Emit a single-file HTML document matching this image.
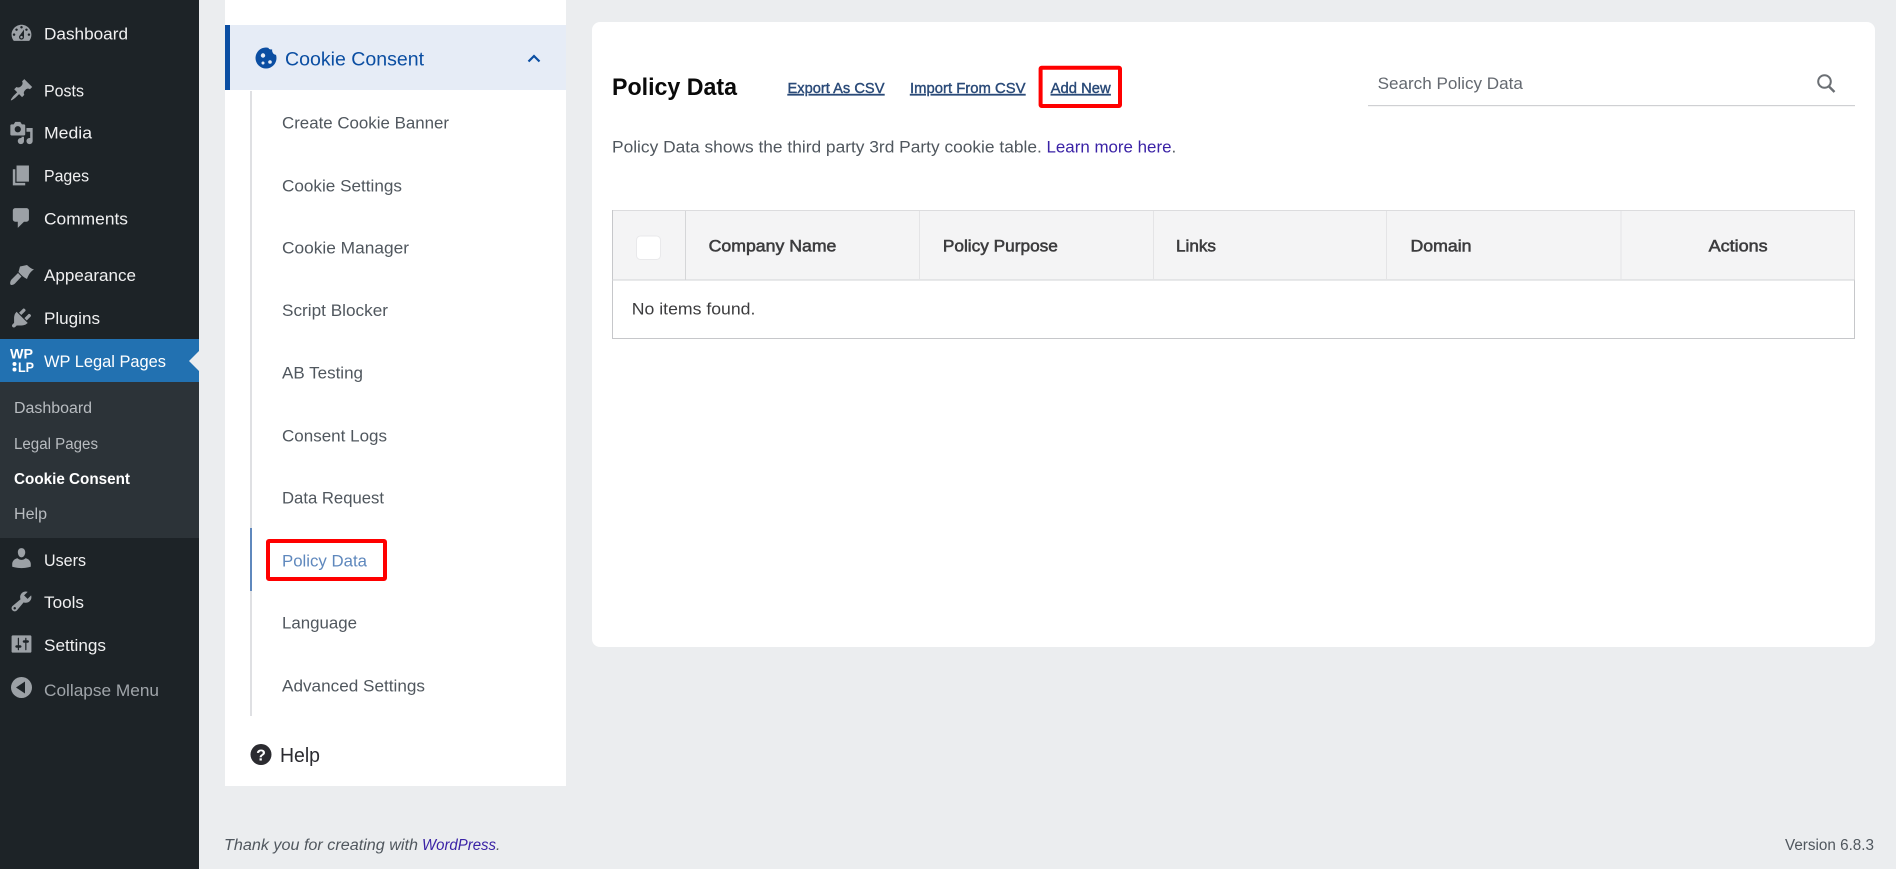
<!DOCTYPE html>
<html lang="en">
<head>
<meta charset="utf-8">
<title>Policy Data</title>
<style>
html,body{margin:0;padding:0;background:#ebedef;width:1896px;height:869px;overflow:hidden}
svg{display:block}
text{font-family:"Liberation Sans",sans-serif;white-space:pre}
.m{font-size:17px;fill:#f0f0f1}
.s{font-size:15.5px;fill:#b8bcc0}
.i{font-size:17px;fill:#50575e}
.ic{fill:#9ca1a6}
.h{font-size:16.5px;fill:#3c3c3e;stroke:#3c3c3e;stroke-width:.55px}
.l{font-size:14.5px;fill:#2a4a78;stroke:#2a4a78;stroke-width:.4px;text-decoration:underline}
</style>
</head>
<body>
<svg width="1896" height="869" viewBox="0 0 1896 869" xmlns="http://www.w3.org/2000/svg">
<rect width="1896" height="869" fill="#ebedef"/>

<!-- admin sidebar -->
<rect width="199" height="869" fill="#1d2327"/>
<rect y="382" width="199" height="156" fill="#2c3338"/>
<rect y="339" width="199" height="43" fill="#2271b1"/>
<path d="M199 351L189 361L199 371Z" fill="#ebedef"/>

<path class="ic" transform="translate(9.1 21) scale(1.24)" d="M3.76 16h12.48c1.1-1.37 1.76-3.11 1.76-5 0-4.42-3.58-8-8-8s-8 3.58-8 8c0 1.89.66 3.63 1.76 5zM10 4c.55 0 1 .45 1 1s-.45 1-1 1-1-.45-1-1 .45-1 1-1zM6 6c.55 0 1 .45 1 1s-.45 1-1 1-1-.45-1-1 .45-1 1-1zm8 0c.55 0 1 .45 1 1s-.45 1-1 1-1-.45-1-1 .45-1 1-1zm-5.37 5.55L12 7v6c0 1.1-.9 2-2 2s-2-.9-2-2c0-.57.24-1.08.63-1.45zM4 10c.55 0 1 .45 1 1s-.45 1-1 1-1-.45-1-1 .45-1 1-1zm12 0c.55 0 1 .45 1 1s-.45 1-1 1-1-.45-1-1 .45-1 1-1zm-5 3c0-.55-.45-1-1-1s-1 .45-1 1 .45 1 1 1 1-.45 1-1z" fill-rule="evenodd"/>
<path class="ic" transform="translate(9.1 77.6) scale(1.24)" d="M10.44 3.02l1.82-1.82 6.36 6.35-1.83 1.82c-1.05-.68-2.48-.57-3.41.36l-.75.75c-.92.93-1.04 2.35-.35 3.41l-1.83 1.82-2.41-2.41-2.8 2.79c-.42.42-3.38 2.71-3.8 2.29s1.86-3.39 2.28-3.81l2.79-2.79L4.1 9.36l1.83-1.82c1.05.69 2.48.57 3.41-.36l.75-.75c.93-.92 1.05-2.35.35-3.41z"/>
<path class="ic" transform="translate(9.1 120.6) scale(1.24)" d="M13 11V4c0-.55-.45-1-1-1h-1.67L9 1H5L3.67 3H2c-.55 0-1 .45-1 1v7c0 .55.45 1 1 1h10c.55 0 1-.45 1-1zM7 4.5c1.38 0 2.5 1.12 2.5 2.5S8.38 9.5 7 9.5 4.5 8.38 4.5 7 5.62 4.5 7 4.5zM14 6h5v10.5c0 1.38-1.12 2.5-2.5 2.5S14 17.88 14 16.5s1.12-2.5 2.5-2.5c.17 0 .34.02.5.05V9h-3V6zm-4 8.05V13h2v3.5c0 1.38-1.12 2.5-2.5 2.5S7 17.88 7 16.5 8.12 14 9.5 14c.17 0 .34.02.5.05z"/>
<path class="ic" transform="translate(9.1 163) scale(1.24)" d="M6 15V2h10v13H6zm-1 1h8v2H3V5h2v11z"/>
<path class="ic" transform="translate(9.1 205.6) scale(1.24)" d="M5 2h9c1.1 0 2 .9 2 2v7c0 1.1-.9 2-2 2h-2l-5 5v-5H5c-1.1 0-2-.9-2-2V4c0-1.1.9-2 2-2z"/>
<path class="ic" d="M20 266.5L27 265C29 267 31 268.6 34 269.5C31 271 28.5 274.5 27 279C24 277.5 21 275 18.5 272Z"/>
<path class="ic" d="M18 273L21.5 276.5L15 283.5C13.5 285 11 285.5 10.5 284.5C9.8 283.5 10.2 281 11.5 279.5Z"/>
<path class="ic" transform="translate(9.1 305.6) scale(1.24)" d="M13.11 4.36L9.87 7.6 8 5.73l3.24-3.24c.35-.34 1.05-.2 1.56.32.52.51.66 1.21.31 1.55zm-8 1.77l.91-1.12 9.01 9.01-1.19.84c-.71.71-2.63 1.16-3.82 1.16H6.14L4.9 17.26c-.59.59-1.54.59-2.12 0-.59-.58-.59-1.53 0-2.12l1.24-1.24v-3.88c0-1.13.4-3.19 1.09-3.89zm7.26 3.97l3.24-3.24c.34-.35 1.04-.21 1.55.31.52.51.66 1.21.31 1.55l-3.24 3.25z"/>
<path class="ic" transform="translate(9.1 545.6) scale(1.24)" d="M10 2c2.2 0 3.2 2 3 3.9 0 0-.4 3.6-3 3.6S7.1 5.9 7.1 5.9C6.8 4 7.8 2 10 2zM6.8 10.2c1 .9 2 1.3 3.2 1.3s2.2-.4 3.2-1.3c2.5.4 4.3 2.4 4.3 4.6V17s-3.4 1.2-7.5 1.2S2.5 17 2.5 17v-2.2c0-2.2 1.8-4.2 4.3-4.6z"/>
<path class="ic" transform="translate(9.1 589) scale(1.24)" d="M16.68 9.77c-1.34 1.34-3.3 1.67-4.95.99l-5.41 6.52c-.99.99-2.59.99-3.58 0s-.99-2.59 0-3.57l6.52-5.42c-.68-1.65-.35-3.61.99-4.95 1.28-1.28 3.12-1.62 4.72-1.06l-2.89 2.89 2.82 2.82 2.86-2.87c.53 1.58.18 3.39-1.08 4.65zM3.81 16.21c.4.39 1.04.39 1.43 0 .4-.4.4-1.04 0-1.43-.39-.4-1.03-.4-1.43 0-.39.39-.39 1.03 0 1.43z"/>
<path class="ic" transform="translate(9.1 631.6) scale(1.24)" d="M18 16V4c0-.55-.45-1-1-1H3c-.55 0-1 .45-1 1v12c0 .55.45 1 1 1h14c.55 0 1-.45 1-1zM8 11h1c.55 0 1 .45 1 1s-.45 1-1 1H8v1.5c0 .28-.22.5-.5.5s-.5-.22-.5-.5V13H6c-.55 0-1-.45-1-1s.45-1 1-1h1V5.5c0-.28.22-.5.5-.5s.5.22.5.5V11zm5-2h-1c-.55 0-1-.45-1-1s.45-1 1-1h1V5.5c0-.28.22-.5.5-.5s.5.22.5.5V7h1c.55 0 1 .45 1 1s-.45 1-1 1h-1v5.5c0 .28-.22.5-.5.5s-.5-.22-.5-.5V9z"/>
<circle class="ic" cx="21.5" cy="687.5" r="10.5"/>
<path d="M25 681.5v12l-9-6z" fill="#1d2327"/>

<text class="m" x="44" y="39.5" textLength="84" lengthAdjust="spacingAndGlyphs">Dashboard</text>
<text class="m" x="44" y="96.5" textLength="40" lengthAdjust="spacingAndGlyphs">Posts</text>
<text class="m" x="44" y="138.5" textLength="48" lengthAdjust="spacingAndGlyphs">Media</text>
<text class="m" x="44" y="181.5" textLength="45" lengthAdjust="spacingAndGlyphs">Pages</text>
<text class="m" x="44" y="224.5" textLength="84" lengthAdjust="spacingAndGlyphs">Comments</text>
<text class="m" x="44" y="281" textLength="92" lengthAdjust="spacingAndGlyphs">Appearance</text>
<text class="m" x="44" y="324" textLength="56" lengthAdjust="spacingAndGlyphs">Plugins</text>
<text class="m" x="44" y="367" textLength="122" lengthAdjust="spacingAndGlyphs" style="fill:#fff">WP Legal Pages</text>
<text x="10" y="358.5" font-size="14" font-weight="700" fill="#fff" textLength="23" lengthAdjust="spacingAndGlyphs">WP</text>
<circle cx="14.5" cy="364" r="2" fill="#fff"/><circle cx="14.5" cy="369.5" r="2" fill="#fff"/>
<text x="18" y="372" font-size="14" font-weight="700" fill="#fff" textLength="16" lengthAdjust="spacingAndGlyphs">LP</text>

<text class="s" x="14" y="413" textLength="78" lengthAdjust="spacingAndGlyphs">Dashboard</text>
<text class="s" x="14" y="449" textLength="84" lengthAdjust="spacingAndGlyphs">Legal Pages</text>
<text class="s" x="14" y="484" textLength="116" lengthAdjust="spacingAndGlyphs" font-weight="700" style="fill:#fff">Cookie Consent</text>
<text class="s" x="14" y="519" textLength="33" lengthAdjust="spacingAndGlyphs">Help</text>

<text class="m" x="44" y="566" textLength="42" lengthAdjust="spacingAndGlyphs">Users</text>
<text class="m" x="44" y="608" textLength="40" lengthAdjust="spacingAndGlyphs">Tools</text>
<text class="m" x="44" y="651" textLength="62" lengthAdjust="spacingAndGlyphs">Settings</text>
<text class="m" x="44" y="696" textLength="115" lengthAdjust="spacingAndGlyphs" style="fill:#a0a5aa">Collapse Menu</text>

<!-- plugin sub navigation -->
<rect x="225" y="0" width="341" height="786" fill="#fff"/>
<rect x="225" y="25" width="341" height="65" fill="#e6ecf6"/>
<rect x="225" y="25" width="5" height="65" fill="#0b4ea2"/>
<circle cx="266" cy="58" r="10.5" fill="#0b4ea2"/>
<circle cx="276.5" cy="50.5" r="4.4" fill="#e6ecf6"/>
<circle cx="271" cy="46.5" r="3" fill="#e6ecf6"/>
<circle cx="263" cy="55.5" r="2.2" fill="#e6ecf6"/>
<circle cx="270" cy="62" r="1.8" fill="#e6ecf6"/>
<circle cx="263" cy="63" r="1.5" fill="#e6ecf6"/>
<text x="285" y="65.5" font-size="19.5" fill="#0b4ea2" textLength="139" lengthAdjust="spacingAndGlyphs">Cookie Consent</text>
<path d="M528.5 61.5L534 56L539.5 61.5" fill="none" stroke="#0b4ea2" stroke-width="2.2"/>

<rect x="250" y="91" width="2" height="625" fill="#dfe0e3"/>
<rect x="250" y="528" width="2" height="63" fill="#5f88bd"/>
<text class="i" x="282" y="128.5" textLength="167" lengthAdjust="spacingAndGlyphs">Create Cookie Banner</text>
<text class="i" x="282" y="191.5" textLength="120" lengthAdjust="spacingAndGlyphs">Cookie Settings</text>
<text class="i" x="282" y="253.5" textLength="127" lengthAdjust="spacingAndGlyphs">Cookie Manager</text>
<text class="i" x="282" y="316" textLength="106" lengthAdjust="spacingAndGlyphs">Script Blocker</text>
<text class="i" x="282" y="378.5" textLength="81" lengthAdjust="spacingAndGlyphs">AB Testing</text>
<text class="i" x="282" y="441.5" textLength="105" lengthAdjust="spacingAndGlyphs">Consent Logs</text>
<text class="i" x="282" y="503.5" textLength="102" lengthAdjust="spacingAndGlyphs">Data Request</text>
<text class="i" x="282" y="566.5" textLength="85" lengthAdjust="spacingAndGlyphs" style="fill:#5f88bd">Policy Data</text>
<text class="i" x="282" y="628.5" textLength="75" lengthAdjust="spacingAndGlyphs">Language</text>
<text class="i" x="282" y="691.5" textLength="143" lengthAdjust="spacingAndGlyphs">Advanced Settings</text>
<rect x="268" y="541" width="117" height="38" rx="1" fill="none" stroke="#f00" stroke-width="4"/>

<circle cx="261" cy="754.5" r="10.5" fill="#2b2b30"/>
<text x="261" y="760.5" font-size="16" font-weight="700" fill="#fff" text-anchor="middle">?</text>
<text x="280" y="762" font-size="20" fill="#2b2b30" textLength="40" lengthAdjust="spacingAndGlyphs">Help</text>

<!-- main card -->
<rect x="592" y="22" width="1283" height="625" rx="8" fill="#fff"/>
<text x="612" y="95" font-size="24" font-weight="700" fill="#0a0a0a" textLength="125" lengthAdjust="spacingAndGlyphs">Policy Data</text>
<text class="l" x="787.5" y="93" textLength="97" lengthAdjust="spacingAndGlyphs">Export As CSV</text>
<text class="l" x="910" y="93" textLength="115.5" lengthAdjust="spacingAndGlyphs">Import From CSV</text>
<text class="l" x="1050.7" y="93" textLength="60" lengthAdjust="spacingAndGlyphs">Add New</text>
<rect x="1040.6" y="67.7" width="79.4" height="38.3" rx="1" fill="none" stroke="#f00" stroke-width="4"/>

<text x="1377.6" y="89" font-size="17" fill="#646970" textLength="145.3" lengthAdjust="spacingAndGlyphs">Search Policy Data</text>
<rect x="1368" y="105" width="487" height="1.2" fill="#cfd0d3"/>
<circle cx="1824.5" cy="81.5" r="6.3" fill="none" stroke="#6b6f74" stroke-width="2"/>
<path d="M1829 86.5L1834.5 92" stroke="#6b6f74" stroke-width="2.4" fill="none"/>

<text x="612" y="152.5" font-size="17" fill="#50575e" textLength="429.8" lengthAdjust="spacingAndGlyphs">Policy Data shows the third party 3rd Party cookie table.</text>
<text x="1046.5" y="152.5" font-size="17" fill="#3a22a6" textLength="125" lengthAdjust="spacingAndGlyphs">Learn more here</text>
<text x="1171.5" y="152.5" font-size="17" fill="#50575e">.</text>

<!-- table -->
<rect x="612.5" y="210.5" width="1242" height="128" fill="#fff" stroke="#c6c7ca"/>
<rect x="613" y="211" width="1241" height="69" fill="#f4f4f5"/>
<path d="M613 210.5H1855" stroke="#dcdcde"/>
<path d="M1854.5 211V280" stroke="#dcdcde"/>
<rect x="612" y="279.5" width="1243" height="1" fill="#d2d3d6"/>
<path d="M685.5 211V280" stroke="#d5d6d8"/>
<path d="M919.5 211V280M1153.5 211V280M1386.5 211V280M1621 211V280" stroke="#e4e4e6"/>
<rect x="636.5" y="236" width="24" height="23.5" rx="4" fill="#fff" stroke="#e9e9eb"/>
<text class="h" x="708.6" y="251.5" textLength="127.8" lengthAdjust="spacingAndGlyphs">Company Name</text>
<text class="h" x="942.9" y="251.5" textLength="115" lengthAdjust="spacingAndGlyphs">Policy Purpose</text>
<text class="h" x="1176" y="251.5" textLength="40" lengthAdjust="spacingAndGlyphs">Links</text>
<text class="h" x="1410.5" y="251.5" textLength="61" lengthAdjust="spacingAndGlyphs">Domain</text>
<text class="h" x="1708.6" y="251.5" textLength="59" lengthAdjust="spacingAndGlyphs">Actions</text>
<text x="631.8" y="314.5" font-size="17" fill="#3c3c3e" textLength="123.6" lengthAdjust="spacingAndGlyphs">No items found.</text>

<!-- footer -->
<text x="224" y="850" font-size="15.5" font-style="italic" fill="#50575e" textLength="194" lengthAdjust="spacingAndGlyphs">Thank you for creating with</text>
<text x="422" y="850" font-size="15.5" font-style="italic" fill="#3a22a6" textLength="74" lengthAdjust="spacingAndGlyphs">WordPress</text>
<text x="496" y="850" font-size="15.5" font-style="italic" fill="#50575e">.</text>
<text x="1785" y="850" font-size="15.5" fill="#50575e" textLength="89" lengthAdjust="spacingAndGlyphs">Version 6.8.3</text>
</svg>
</body>
</html>
